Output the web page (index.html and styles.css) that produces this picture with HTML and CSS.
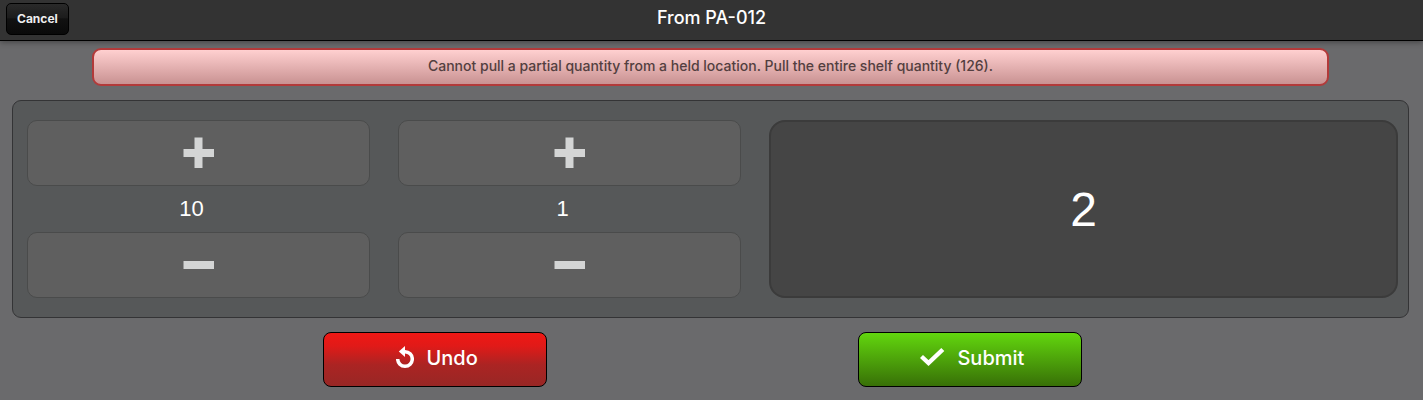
FILE: index.html
```
<!DOCTYPE html>
<html lang="en">
<head>
    <meta charset="UTF-8">
    <meta name="viewport" content="width=device-width, initial-scale=1.0">
    <title>From PA-012</title>
    <link rel="stylesheet" href="styles.css">
</head>
<body>

    <header class="header">
        <button type="button" class="cancel-button">Cancel</button>
        <h1>From PA-012</h1>
    </header>

    <main class="content">
        <div class="alert" role="alert">Cannot pull a partial quantity from a held location. Pull the entire shelf quantity (126).</div>

        <section class="quantity-panel">
            <div class="stepper">
                <button type="button" class="step-button" aria-label="Add 10">
                    <svg width="32" height="32" viewBox="0 0 32 32" fill="currentColor"><path d="M11.5 .5h8V12H31v8H19.5v11h-8V20H.5v-8h11z"/></svg>
                </button>
                <span class="step-label">10</span>
                <button type="button" class="step-button" aria-label="Subtract 10">
                    <svg width="32" height="32" viewBox="0 0 32 32" fill="currentColor"><path d="M.5 12H31v8H.5z"/></svg>
                </button>
            </div>
            <div class="stepper">
                <button type="button" class="step-button" aria-label="Add 1">
                    <svg width="32" height="32" viewBox="0 0 32 32" fill="currentColor"><path d="M11.5 .5h8V12H31v8H19.5v11h-8V20H.5v-8h11z"/></svg>
                </button>
                <span class="step-label">1</span>
                <button type="button" class="step-button" aria-label="Subtract 1">
                    <svg width="32" height="32" viewBox="0 0 32 32" fill="currentColor"><path d="M.5 12H31v8H.5z"/></svg>
                </button>
            </div>
            <output class="quantity">2</output>
        </section>

        <div class="actions">
            <button type="button" class="action-button undo">
                <svg width="18" height="24" viewBox="0 0 18 24" fill="none"><path d="M1.7 13a7.3 7.3 0 1 0 7.3-7.3" stroke="currentColor" stroke-width="3.5"/><path d="M9 0v11L2.8 5.6z" fill="currentColor"/></svg>
                Undo
            </button>
            <button type="button" class="action-button submit">
                <svg width="26" height="24" viewBox="0 0 26 24" fill="none"><path d="M2.5 10.5l7 6.5L23.8 3.5" stroke="currentColor" stroke-width="4.4"/></svg>
                Submit
            </button>
        </div>
    </main>

</body>
</html>
```
FILE: styles.css
```
/* Global Style */
* {
    box-sizing: border-box;
}

body {
    font-family: Inter, sans-serif;
    background-color: #6a6a6c;
    color: #fff;
    margin: 0;
    min-height: 100vh;
}

button {
    font-family: inherit;
    cursor: pointer;
}

/* Header */
.header {
    display: grid;
    grid-template-columns: 1fr auto 1fr;
    align-items: center;
    padding: 3px 6px 5px;
    background-color: #333;
    border-bottom: 1px solid #000;
    box-shadow: 0 1px 6px rgba(0, 0, 0, 0.4);
}

.header h1 {
    margin: 0;
    padding-bottom: 2px;
    font-size: 18px;
    font-weight: 500;
    line-height: 28px;
}

.cancel-button {
    justify-self: start;
    height: 32px;
    padding: 0 10px 2px;
    font-size: 12px;
    font-weight: 700;
    color: #eee;
    background: linear-gradient(#2a2a2a, #1c1c1c 45%, #111 50%, #0a0a0a);
    border: 1px solid #000;
    border-radius: 5px;
}

.content {
    padding: 7px 14px 13px 12px;
}

.alert {
    margin: 0 80px 14px;
    padding: 6px 16px 8px;
    font-size: 14px;
    font-weight: 500;
    line-height: 20px;
    text-align: center;
    color: #533f40;
    background: linear-gradient(#ffd0d0, #c99292);
    border: 2px solid #b23a3a;
    border-radius: 9px;
}

/* Quantity */
.quantity-panel {
    display: grid;
    grid-template-columns: 6fr 6fr 11fr;
    gap: 28px;
    padding: 19px 10px 19px 14px;
    background-color: #565859;
    border: 1px solid #343436;
    border-radius: 9px;
}

.stepper {
    display: flex;
    flex-direction: column;
}

.step-button {
    display: flex;
    justify-content: center;
    align-items: center;
    height: 66px;
    color: #d4d5d5;
    background-color: #5f5f5f;
    border: 1px solid #4a4b4b;
    border-radius: 10px;
}

.step-label {
    padding-right: 14px;
    font-family: "Liberation Sans", sans-serif;
    font-size: 22px;
    line-height: 46px;
    text-align: center;
}

.quantity {
    display: flex;
    justify-content: center;
    align-items: center;
    font-family: "Liberation Sans", sans-serif;
    font-size: 48px;
    background-color: #454545;
    border: 2px solid #3b3b3b;
    border-radius: 16px;
}

/* Actions */
.actions {
    display: grid;
    grid-template-columns: 39fr 28fr 39fr 28fr 41fr;
    margin-top: 14px;
}

.action-button {
    display: flex;
    justify-content: center;
    align-items: center;
    gap: 12px;
    height: 55px;
    padding: 0 0 4px 4px;
    font-size: 20px;
    font-weight: 500;
    color: #fff;
    border: 1px solid #000;
    border-radius: 8px;
}

.undo {
    grid-column: 2;
    background: linear-gradient(#f01814, #e01a18 25%, #ab2423 60%, #982725);
}

.submit {
    grid-column: 4;
    background: linear-gradient(#62d60e, #387007);
}
```
